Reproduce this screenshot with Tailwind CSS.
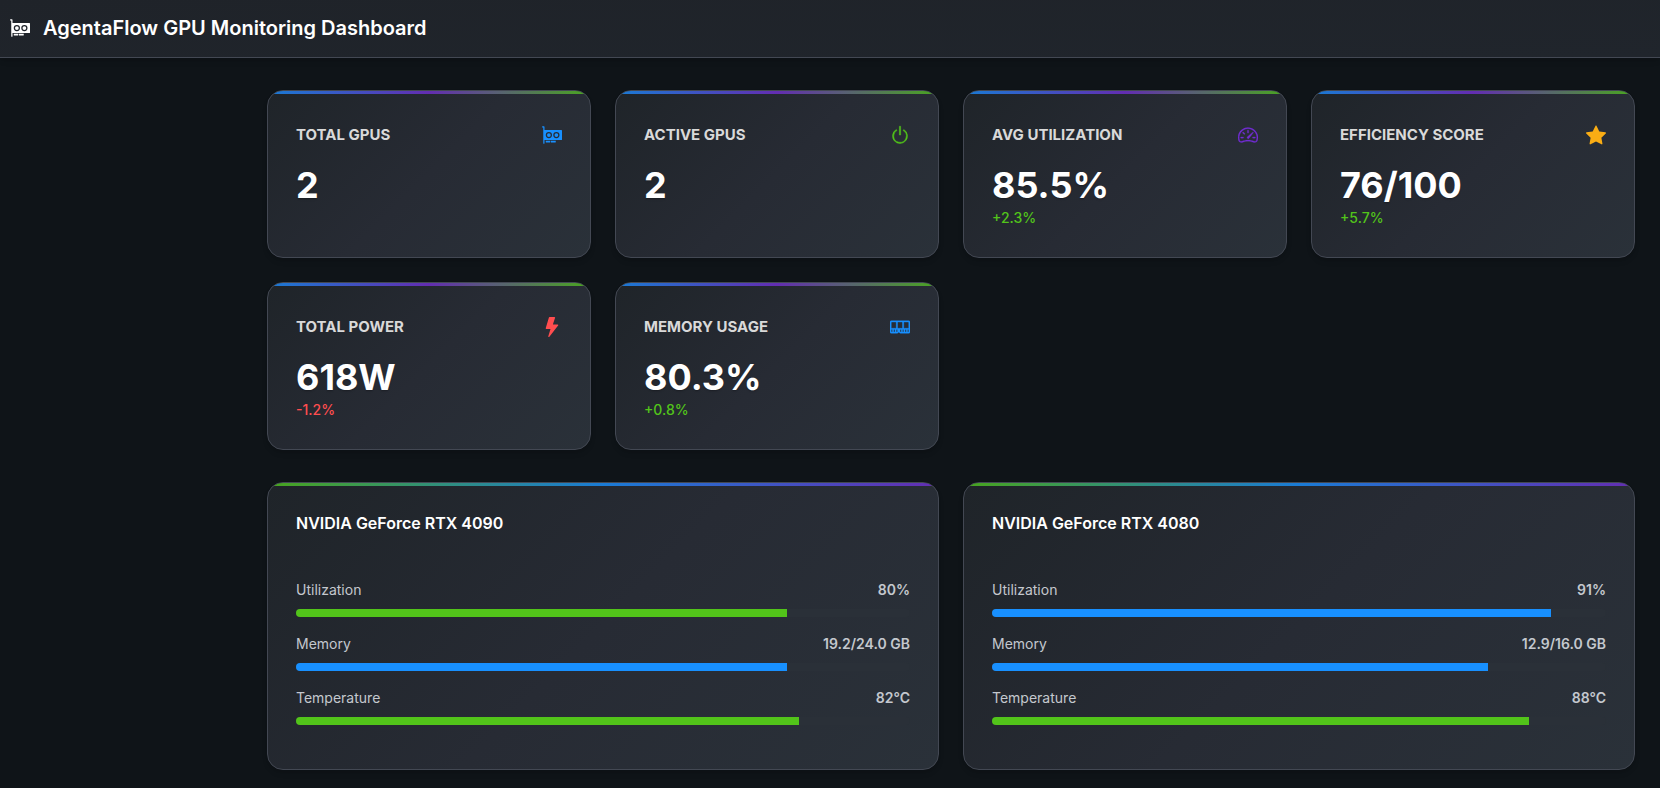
<!DOCTYPE html>
<html lang="en">
<head>
<meta charset="utf-8">
<meta name="viewport" content="width=device-width, initial-scale=1">
<title>AgentaFlow GPU Monitoring Dashboard</title>
<script src="https://cdn.jsdelivr.net/npm/@tailwindcss/browser@4"></script>
</head>
<body class="min-h-screen bg-[#0f1418] font-['Inter',sans-serif] text-white">
<svg class="hidden" aria-hidden="true">
  <symbol id="gpu" viewBox="0 0 16 16"><path d="M4 8a1.500 1.500 0 1 1 3 0 1.500 1.500 0 0 1-3 0m7.500-1.500a1.500 1.500 0 1 0 0 3 1.500 1.500 0 0 0 0-3"/><path d="M0 1.500A.5.5 0 0 1 .5 1h1a.5.5 0 0 1 .5.5V4h13.500a.5.5 0 0 1 .5.5v7a.5.5 0 0 1-.5.5H2v2.500a.5.5 0 0 1-1 0V2H.5a.5.5 0 0 1-.5-.5m5.500 4a2.500 2.500 0 1 0 0 5 2.500 2.500 0 0 0 0-5M9 8a2.500 2.500 0 1 0 5 0 2.500 2.500 0 0 0-5 0"/><path d="M3 12.500h3.500v1a.5.5 0 0 1-.5.5H3.500a.5.5 0 0 1-.5-.5zm4 1v-1h4v1a.5.5 0 0 1-.5.5h-3a.5.5 0 0 1-.5-.5"/></symbol>
  <symbol id="power" viewBox="0 0 16 16"><g stroke="currentColor" stroke-width=".4"><path d="M7.500 1v7h1V1z"/><path d="M3 8.812a5 5 0 0 1 2.578-4.375l-.485-.874A6 6 0 1 0 11 3.616l-.501.865A5 5 0 1 1 3 8.812"/></g></symbol>
  <symbol id="speed" viewBox="0 0 16 16"><g stroke="currentColor" stroke-width=".2"><path d="M8 4a.5.5 0 0 1 .5.5V6a.5.5 0 0 1-1 0V4.500A.5.5 0 0 1 8 4M3.732 5.732a.5.5 0 0 1 .707 0l.915.914a.5.5 0 1 1-.708.708l-.914-.915a.5.5 0 0 1 0-.707M2 10a.5.5 0 0 1 .5-.5h1.586a.5.5 0 0 1 0 1H2.500A.5.5 0 0 1 2 10m9.500 0a.5.5 0 0 1 .5-.5h1.500a.5.5 0 0 1 0 1H12a.5.5 0 0 1-.5-.5m.754-4.246a.39.39 0 0 0-.527-.02L7.547 9.310a.91.91 0 1 0 1.302 1.258l3.434-4.297a.39.39 0 0 0-.029-.518z"/><path fill-rule="evenodd" d="M0 10a8 8 0 1 1 15.547 2.661c-.442 1.253-1.845 1.602-2.932 1.250C11.309 13.488 9.475 13 8 13c-1.474 0-3.310.488-4.615.911-1.087.352-2.490.003-2.932-1.250A8 8 0 0 1 0 10m8-7a7 7 0 0 0-6.603 9.329c.203.575.923.876 1.680.630C4.397 12.533 6.358 12 8 12s3.604.532 4.923.960c.757.245 1.477-.056 1.680-.631A7 7 0 0 0 8 3"/></g></symbol>
  <symbol id="star" viewBox="0 0 16 16"><path d="M3.612 15.443c-.386.198-.824-.149-.746-.592l.830-4.730L.173 6.765c-.329-.314-.158-.888.283-.950l4.898-.696L7.538.792c.197-.390.730-.390.927 0l2.184 4.327 4.898.696c.441.062.612.636.282.950l-3.522 3.356.830 4.730c.078.443-.360.790-.746.592L8 13.187l-4.389 2.256z"/></symbol>
  <symbol id="bolt" viewBox="0 0 16 16"><path d="M5.520.359A.5.5 0 0 1 6 0h4a.5.5 0 0 1 .474.658L8.694 6H12.500a.5.5 0 0 1 .395.807l-7 9a.5.5 0 0 1-.873-.454L6.823 9.500H3.500a.5.5 0 0 1-.48-.641z"/></symbol>
  <symbol id="memory" viewBox="0 0 16 16"><path stroke="currentColor" stroke-width=".3" d="M1 3a1 1 0 0 0-1 1v8a1 1 0 0 0 1 1h4.586a1 1 0 0 0 .707-.293l.353-.353a.5.5 0 0 1 .708 0l.353.353a1 1 0 0 0 .707.293H15a1 1 0 0 0 1-1V4a1 1 0 0 0-1-1zm.5 1h3a.5.5 0 0 1 .5.5v4a.5.5 0 0 1-.5.5h-3a.5.5 0 0 1-.5-.5v-4a.5.5 0 0 1 .5-.5m5 0h3a.5.5 0 0 1 .5.5v4a.5.5 0 0 1-.5.5h-3a.5.5 0 0 1-.5-.5v-4a.5.5 0 0 1 .5-.5m4.500.5a.5.5 0 0 1 .5-.5h3a.5.5 0 0 1 .5.5v4a.5.5 0 0 1-.5.5h-3a.5.5 0 0 1-.5-.5zM2 10v2H1v-2zm2 0v2H3v-2zm2 0v2H5v-2zm3 0v2H8v-2zm2 0v2h-1v-2zm2 0v2h-1v-2zm2 0v2h-1v-2z"/></symbol>
</svg>
<header class="flex h-[58px] items-center gap-[13px] border-b border-[#434853] bg-linear-to-br from-[#1f2329] to-[#20252c] px-2.5 pb-0.5 shadow-md">
  <svg class="size-5 fill-current" aria-hidden="true"><use href="#gpu"/></svg>
  <h1 class="text-xl font-semibold">AgentaFlow GPU Monitoring Dashboard</h1>
</header>
<div class="flex">
  <div class="w-[243px] shrink-0"></div>
  <main class="min-w-0 flex-1 pt-8 pr-[25px] pb-4 pl-6">
    <section id="metrics" class="grid grid-cols-4 gap-6" aria-label="Metrics"></section>
    <section id="gpus" class="mt-8 grid grid-cols-2 gap-6" aria-label="GPUs"></section>
  </main>
</div>
<script>
const metrics = [
  ['Total GPUs', '2', '', 'gpu', 'text-[#1890ff]', ''],
  ['Active GPUs', '2', '', 'power', 'text-[#52c41a]', ''],
  ['Avg Utilization', '85.5%', '+2.3%', 'speed', 'text-[#722ed1]', 'text-[#52c41a]'],
  ['Efficiency Score', '76/100', '+5.7%', 'star', 'text-[#faad14]', 'text-[#52c41a]'],
  ['Total Power', '618W', '-1.2%', 'bolt', 'text-[#ff4d4f]', 'text-[#ff4d4f]'],
  ['Memory Usage', '80.3%', '+0.8%', 'memory', 'text-[#1890ff]', 'text-[#52c41a]'],
];
const card = 'relative overflow-hidden rounded-2xl border border-[#434853] bg-linear-135 from-[#1f2429] via-[#272b34] to-[#2a3139] px-7 shadow-md';
document.getElementById('metrics').innerHTML = metrics.map(([label, value, change, icon, color, tone]) => `
  <article class="${card} min-h-[168px] pt-8">
    <div class="absolute inset-x-0 top-0 h-[3px] bg-linear-to-r/srgb from-[#1890ff] via-[#722ed1] to-[#52c41a] opacity-80"></div>
    <div class="flex h-6 items-center justify-between">
      <h2 class="text-[15px] font-bold uppercase text-[#d9d9d9]">${label}</h2>
      <svg class="size-5 overflow-visible fill-current ${color}" aria-hidden="true"><use href="#${icon}"/></svg>
    </div>
    <p class="mt-[18px] text-4xl font-bold text-shadow-sm">${value}</p>
    <p class="mt-[3px] text-sm font-medium ${tone}">${change}</p>
  </article>`).join('');

const gpus = [
  ['NVIDIA GeForce RTX 4090', [['Utilization', '80%', 80, 'bg-[#52c41a]'], ['Memory', '19.2/24.0 GB', 80, 'bg-[#1890ff]'], ['Temperature', '82°C', 82, 'bg-[#52c41a]']]],
  ['NVIDIA GeForce RTX 4080', [['Utilization', '91%', 91, 'bg-[#1890ff]'], ['Memory', '12.9/16.0 GB', 80.8, 'bg-[#1890ff]'], ['Temperature', '88°C', 87.5, 'bg-[#52c41a]']]],
];
document.getElementById('gpus').innerHTML = gpus.map(([name, rows]) => `
  <article class="${card} min-h-[288px] pt-7">
    <div class="absolute inset-x-0 top-0 h-[3px] bg-linear-to-r/srgb from-[#52c41a] via-[#1890ff] to-[#722ed1] opacity-80"></div>
    <h2 class="text-base font-semibold">${name}</h2>
    <div class="mt-11 flex flex-col gap-4">${rows.map(([label, value, pct, color]) => `
      <div>
        <div class="flex h-[22px] items-center justify-between text-sm text-[#c4c8ce]">
          <span>${label}</span><span class="font-semibold">${value}</span>
        </div>
        <div class="mt-2 h-2 overflow-hidden rounded bg-[#2a3038]" role="progressbar" aria-label="${label}" aria-valuenow="${pct}">
          <div class="h-full ${color}" style="width:${pct}%"></div>
        </div>
      </div>`).join('')}
    </div>
  </article>`).join('');
</script>
</body>
</html>
